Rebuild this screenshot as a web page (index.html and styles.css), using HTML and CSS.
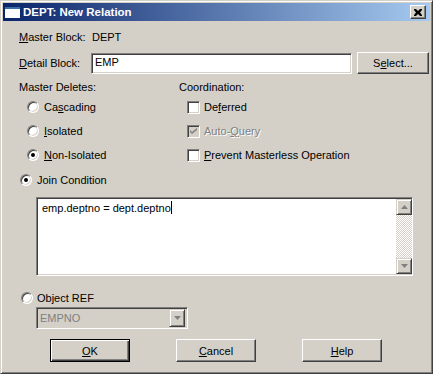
FILE: index.html
```html
<!DOCTYPE html>
<html>
<head>
<meta charset="UTF-8">
<link rel="stylesheet" href="styles.css">
</head>
<body>
<div class="window">
  <div class="titlebar">
    <svg class="title-icon" width="15" height="11" viewBox="0 0 15 11">
      <rect x="0" y="0" width="15" height="11" fill="#fff"/>
      <rect x="0" y="0" width="15" height="2" fill="#3a6ea5"/>
    </svg>
    <span class="title-text">DEPT: New Relation</span>
    <span class="close-btn">
      <svg width="8" height="7" viewBox="0 0 8 7">
        <path d="M0 0h2l2 2 2-2h2v1l-2 2.5 2 2.5v1h-2l-2-2-2 2h-2v-1l2-2.5-2-2.5z" fill="#000"/>
      </svg>
    </span>
  </div>

  <div class="content">
    <div class="row row-master">
      <span class="lbl"><u>M</u>aster Block:</span>
      <span class="value">DEPT</span>
    </div>

    <div class="row row-detail">
      <span class="lbl"><u>D</u>etail Block:</span>
      <div class="field detail-input">EMP</div>
      <div class="btn select-btn">S<u>e</u>lect...</div>
    </div>

    <div class="columns">
      <div class="col col-left">
        <div class="heading">Master Deletes:</div>
        <div class="opt radio-opt"><span class="radio"></span><span>Ca<u>s</u>cading</span></div>
        <div class="opt radio-opt"><span class="radio"></span><span><u>I</u>solated</span></div>
        <div class="opt radio-opt"><span class="radio checked"></span><span><u>N</u>on-Isolated</span></div>
      </div>
      <div class="col col-right">
        <div class="heading">Coordination:</div>
        <div class="opt check-opt"><span class="check"></span><span>De<u>f</u>erred</span></div>
        <div class="opt check-opt disabled"><span class="check checked">
          <svg width="7" height="7" viewBox="0 0 7 7"><path d="M0 2l2 2 5-4v2l-5 4-2-2z" fill="#808080"/></svg>
        </span><span>Auto-<u>Q</u>uery</span></div>
        <div class="opt check-opt"><span class="check"></span><span><u>P</u>revent Masterless Operation</span></div>
      </div>
    </div>

    <div class="opt join-opt"><span class="radio checked"></span><span>Join Condition</span></div>

    <div class="field textbox">
      <div class="text-area">emp.deptno = dept.deptno<span class="caret"></span></div>
      <div class="vscroll">
        <div class="sbtn"><svg width="7" height="4" viewBox="0 0 7 4"><path d="M3.5 0L7 4H0z" fill="#808080"/></svg></div>
        <div class="track"></div>
        <div class="sbtn"><svg width="7" height="4" viewBox="0 0 7 4"><path d="M0 0h7L3.5 4z" fill="#808080"/></svg></div>
      </div>
    </div>

    <div class="opt ref-opt"><span class="radio"></span><span>Object REF</span></div>

    <div class="field combo">
      <span class="combo-text">EMPNO</span>
      <div class="sbtn combo-btn"><svg width="7" height="4" viewBox="0 0 7 4"><path d="M0 0h7L3.5 4z" fill="#808080"/></svg></div>
    </div>

    <div class="buttons">
      <div class="btn default"><u>O</u>K</div>
      <div class="btn"><u>C</u>ancel</div>
      <div class="btn"><u>H</u>elp</div>
    </div>
  </div>
</div>
</body>
</html>
```

FILE: styles.css
```css
body{
margin: 0;
background: #d4d0c8;
font-family: "Liberation Sans", Arial, sans-serif;
font-size: 11px;
color: #000;
}

.window{
width: 433px;
height: 374px;
box-sizing: border-box;
border: 1px solid;
border-color: #d4d0c8 #404040 #404040 #d4d0c8;
box-shadow: inset 1px 1px #fff, inset -1px -1px #808080;
padding: 2px;
background: #d4d0c8;
}

.titlebar{
height: 18px;
display: flex;
align-items: center;
background: linear-gradient(to right, #0a246a, #a6caf0);
padding-left: 2px;
padding-right: 4px;
}

.title-icon{
margin-top: 1px;
}

.title-text{
color: #fff;
font-weight: bold;
font-size: 11.5px;
margin-left: 3px;
flex: 1;
}

.close-btn{
width: 16px;
height: 14px;
box-sizing: border-box;
background: #d4d0c8;
border: 1px solid;
border-color: #fff #404040 #404040 #fff;
box-shadow: inset -1px -1px #808080;
display: flex;
align-items: center;
justify-content: center;
padding-right: 1px;
}

.content{
padding: 6px 0 0 16px;
}

.row{
display: flex;
align-items: center;
}

.lbl{
width: 72px;
}

.row-master{
height: 20px;
}

.value{
padding-left: 1px;
}

.row-detail{
height: 22px;
margin-top: 5px;
}

.field{
box-sizing: border-box;
border: 1px solid;
border-color: #808080 #fff #fff #808080;
box-shadow: inset 1px 1px #404040, inset -1px -1px #d4d0c8;
background: #fff;
}

.detail-input{
width: 261px;
height: 21px;
align-self: flex-end;
padding: 2px 3px;
}

.btn{
box-sizing: border-box;
border: 1px solid;
border-color: #fff #404040 #404040 #fff;
box-shadow: inset -1px -1px #808080;
background: #d4d0c8;
display: flex;
align-items: center;
justify-content: center;
}

.select-btn{
width: 72px;
height: 22px;
margin-left: 5px;
}

.columns{
display: flex;
margin-top: 6px;
}

.col-left{
width: 160px;
}

.heading{
height: 15px;
line-height: 15px;
}

.opt{
display: flex;
align-items: center;
height: 24px;
}

.radio-opt, .check-opt{
padding-left: 8px;
}

.radio{
width: 12px;
height: 12px;
box-sizing: border-box;
border-radius: 50%;
border: 1px solid;
border-color: #808080 #fff #fff #808080;
box-shadow: inset 1px 1px #404040, inset -1px -1px #d4d0c8;
background: #fff;
margin-right: 5px;
display: flex;
align-items: center;
justify-content: center;
}

.radio.checked::after{
content: "";
width: 4px;
height: 4px;
border-radius: 50%;
background: #000;
}

.check{
width: 13px;
height: 13px;
box-sizing: border-box;
border: 1px solid;
border-color: #808080 #fff #fff #808080;
box-shadow: inset 1px 1px #404040, inset -1px -1px #d4d0c8;
background: #fff;
margin-right: 4px;
display: flex;
align-items: center;
justify-content: center;
}

.disabled{
color: #808080;
text-shadow: 1px 1px #fff;
}

.disabled .check{
background: #d4d0c8;
}

.join-opt{
margin-top: 1px;
padding-left: 1px;
}

.textbox{
width: 377px;
height: 79px;
margin: 5px 0 0 17px;
display: flex;
}

.text-area{
flex: 1;
padding: 3px 0 0 5px;
}

.caret{
display: inline-block;
width: 1px;
height: 13px;
background: #000;
vertical-align: -2px;
}

.vscroll{
width: 16px;
display: flex;
flex-direction: column;
margin: 1px 0 1px 0;
}

.track{
flex: 1;
background: repeating-conic-gradient(#fff 0 25%, #d4d0c8 0 50%) 0 0 / 2px 2px;
}

.sbtn{
width: 16px;
height: 16px;
box-sizing: border-box;
border: 1px solid;
border-color: #d4d0c8 #404040 #404040 #d4d0c8;
box-shadow: inset 1px 1px #fff, inset -1px -1px #808080;
background: #d4d0c8;
display: flex;
align-items: center;
justify-content: center;
}

.ref-opt{
height: 16px;
margin-top: 14px;
padding-left: 2px;
}

.ref-opt .radio{
margin-right: 4px;
}

.combo{
width: 152px;
height: 22px;
margin: 1px 0 0 17px;
background: #d4d0c8;
display: flex;
align-items: center;
justify-content: space-between;
padding: 2px;
}

.combo-text{
color: #808080;
padding-left: 1px;
}

.combo-btn{
height: 18px;
}

.buttons{
display: flex;
gap: 46px;
margin: 10px 0 0 31px;
}

.buttons .btn{
width: 80px;
height: 23px;
}

.buttons .btn.default{
border-color: #000;
box-shadow: inset 1px 1px #fff, inset -1px -1px #404040, inset -2px -2px #808080;
}
```
